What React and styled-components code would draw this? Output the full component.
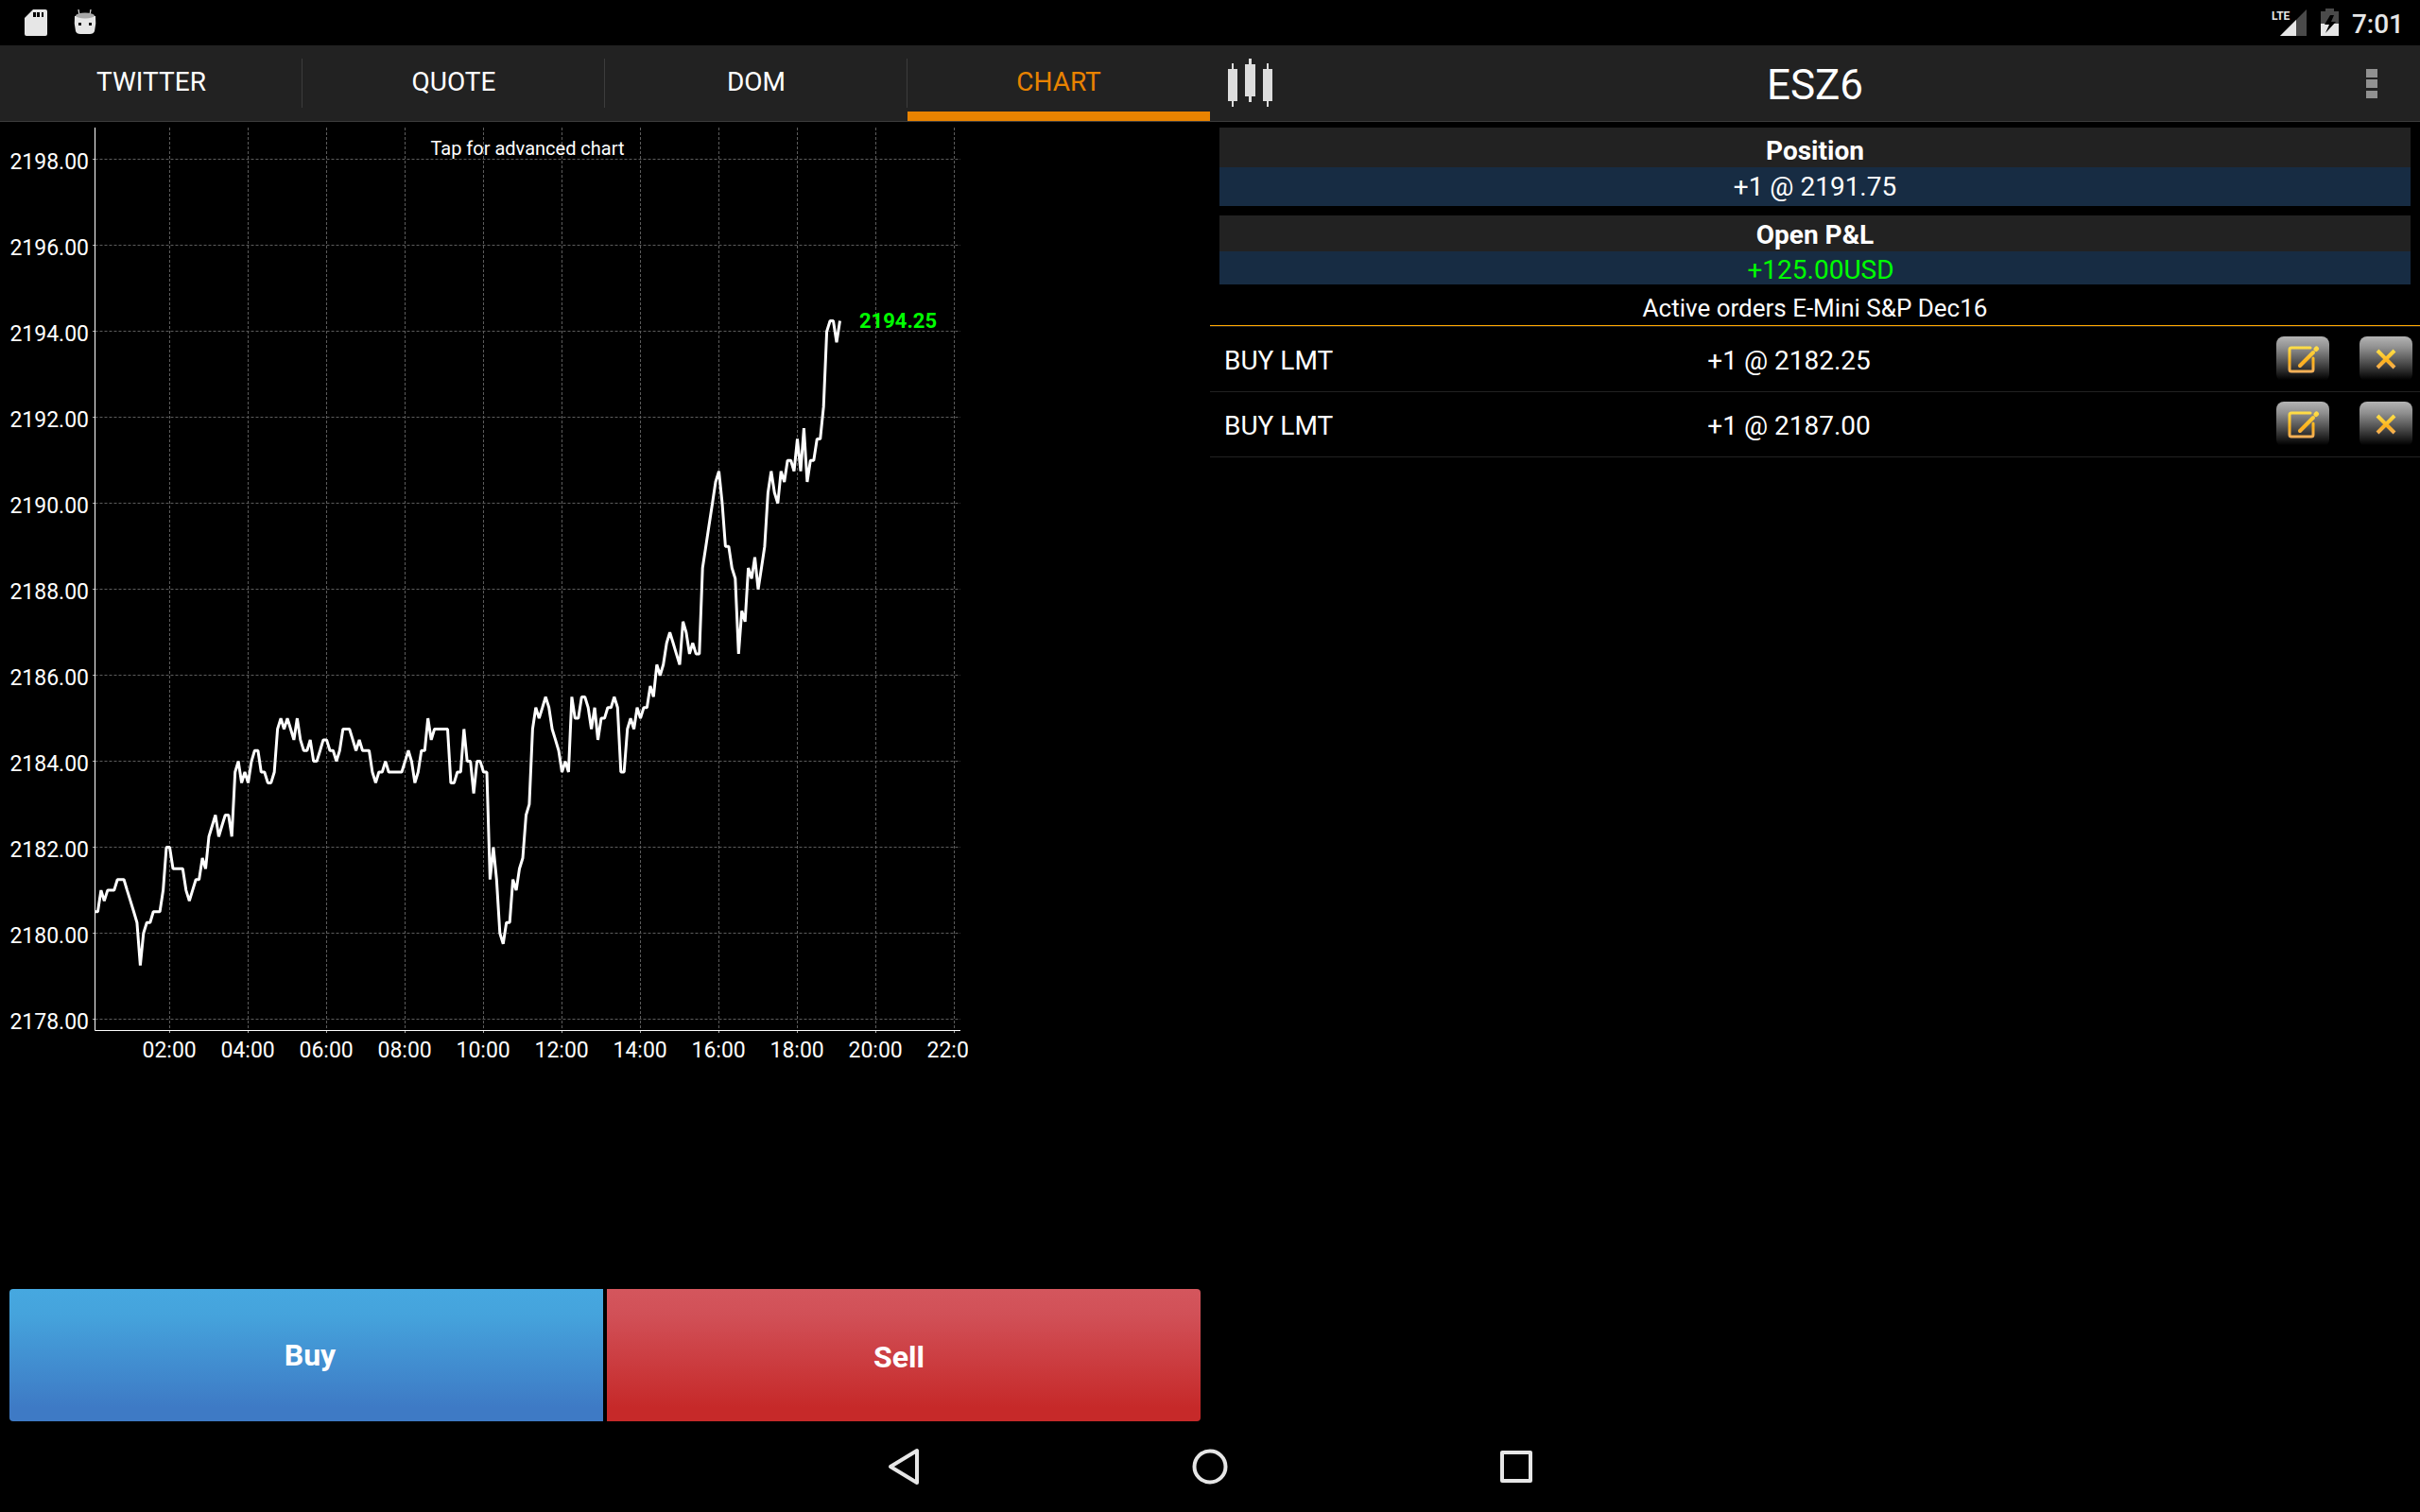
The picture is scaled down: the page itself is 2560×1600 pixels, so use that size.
import React, { useState } from 'react';
import styled, { createGlobalStyle, css } from 'styled-components';

const GlobalStyle = createGlobalStyle`
  * {
    box-sizing: border-box;
  }
  body {
    margin: 0;
    background: #000;
    color: #fff;
    font-family: Roboto, 'Liberation Sans', sans-serif;
    font-size: 28px;
    line-height: 34px;
  }
  button {
    border: 0;
    padding: 0;
    background: none;
    color: inherit;
    font: inherit;
    cursor: pointer;
  }
  svg {
    display: block;
  }
`;

const Page = styled.div`
  display: flex;
  flex-direction: column;
  min-height: 100vh;
`;

const StatusBar = styled.div`
  display: flex;
  justify-content: space-between;
  align-items: center;
  height: 48px;
  padding: 0 17px 0 26px;
  color: #e6e6e6;
`;

const StatusGroup = styled.div`
  display: flex;
  align-items: center;
  gap: ${(props) => props.$gap}px;
`;

const Clock = styled.time`
  font-weight: 500;
  line-height: 28px;
  padding-top: 4px;
`;

const Header = styled.header`
  display: grid;
  grid-template-columns: 1fr 1fr;
  height: 81px;
  background: #222;
  border-bottom: 1px solid #3c3c3c;
`;

const Tabs = styled.nav`
  display: grid;
  grid-template-columns: repeat(4, 1fr);
`;

const Tab = styled.button`
  display: flex;
  align-items: center;
  justify-content: center;
  padding-top: 8px;
  border-bottom: 10px solid ${(props) => (props.$active ? '#e98300' : 'transparent')};
  color: ${(props) => (props.$active ? '#e98300' : '#fff')};
  position: relative;

  &:not(:last-child)::after {
    content: '';
    position: absolute;
    top: 14px;
    right: 0;
    width: 1px;
    height: 52px;
    background: #3c3c3c;
  }
`;

const TitleBar = styled.div`
  display: grid;
  grid-template-columns: 80px 1fr 80px;
  align-items: center;
`;

const Title = styled.h1`
  margin: 0;
  padding-top: 4px;
  font-size: 44px;
  line-height: 52px;
  font-weight: 400;
  text-align: center;
`;

const IconButton = styled.button`
  display: flex;
  justify-content: ${(props) => (props.$end ? 'flex-end' : 'flex-start')};
  padding: ${(props) => (props.$end ? '0 45px 0 0' : '0 0 0 18px')};
`;

const Main = styled.main`
  flex: 1;
  display: grid;
  grid-template-columns: 1fr 1fr;
`;

const Pane = styled.section`
  display: flex;
  flex-direction: column;
  min-width: 0;
`;

const ChartButton = styled.button`
  width: 80%;

  svg {
    width: 100%;
    height: auto;
  }
`;

const AxisText = styled.text`
  fill: #fff;
  font-size: 23px;
`;

const HintText = styled.text`
  fill: #fff;
  font-size: 20px;
`;

const LastText = styled.text`
  fill: #00ff00;
  font-size: 22px;
  font-weight: 700;
`;

const TradeBar = styled.div`
  display: grid;
  grid-template-columns: 1fr 1fr;
  gap: 4px;
  margin-top: auto;
  padding: 0 10px;
`;

const sides = {
  buy: css`
    padding-left: 8px;
    border-radius: 4px 0 0 4px;
    background: linear-gradient(#46a8e0, #45a3dc 20%, #3e7ac5 90%);
  `,
  sell: css`
    padding: 4px 10px 0 0;
    border-radius: 0 4px 4px 0;
    background: linear-gradient(#d4565d, #d15057 20%, #c62929 90%);
  `,
};

const TradeButton = styled.button`
  height: 140px;
  font-size: 32px;
  font-weight: 700;
  ${(props) => sides[props.$side]}
`;

const Info = styled.dl`
  margin: 6px 10px 0;
  text-align: center;

  & + & {
    margin-top: 10px;
  }
`;

const InfoName = styled.dt`
  padding: ${(props) => (props.$tight ? '4px 0 0' : '8px 0 0')};
  background: #222;
  font-weight: 700;
`;

const InfoValue = styled.dd`
  margin: 0;
  padding: ${(props) => (props.$tight ? '5px 0 0 12px' : '4px 0 3px')};
  line-height: ${(props) => (props.$tight ? '30px' : '34px')};
  background: #172c43;
  color: ${(props) => (props.$up ? '#00ff00' : '#fff')};
`;

const Orders = styled.table`
  width: 100%;
  border-collapse: separate;
  border-spacing: 0;

  td {
    height: 69px;
    padding: 0;
    border-bottom: 1px solid #222;
  }

  tr:first-child td {
    height: 70px;
    border-top: 1px solid #222;
  }
`;

const OrdersTitle = styled.caption`
  padding: 8px 0 1px;
  border-bottom: 1px solid #ffa800;
  font-size: 26px;
`;

const OrderSide = styled.td`
  && {
    padding: 4px 0 0 15px;
  }
  width: 1px;
  white-space: nowrap;
`;

const OrderPrice = styled.td`
  && {
    padding: 4px 18px 0 0;
  }
  text-align: center;
`;

const OrderActions = styled.td`
  width: 167px;
`;

const ActionRow = styled.div`
  display: flex;
  gap: 32px;
  padding: 0 8px 0 15px;
`;

const ActionButton = styled.button`
  display: flex;
  align-items: center;
  justify-content: center;
  width: 56px;
  height: 48px;
  border-radius: 8px;
  background: linear-gradient(#b4b4b4, #8f8f8f 25%, #4a4a4a 60%, #000 96%);
`;

const NavBar = styled.footer`
  display: flex;
  justify-content: center;
  height: 96px;
`;

const NavButton = styled.button`
  display: flex;
  align-items: center;
  justify-content: center;
  width: 324px;
`;

const TABS = ['TWITTER', 'QUOTE', 'DOM', 'CHART'];

const ORDERS = [
  { side: 'BUY LMT', price: '+1 @ 2182.25' },
  { side: 'BUY LMT', price: '+1 @ 2187.00' },
];

const HOURS = ['02:00', '04:00', '06:00', '08:00', '10:00', '12:00', '14:00', '16:00', '18:00', '20:00', '22:0'];

// one value per 5 minutes from 00:05, in ticks of 0.25 above 2178.00
const TICKS = [
  10, 10, 12, 11, 12, 12, 12, 13, 13, 13, 12, 11, 10, 9, 5, 8, 9, 9, 10, 10,
  10, 12, 16, 16, 14, 14, 14, 14, 12, 11, 12, 13, 13, 15, 14, 17, 18, 19, 17, 18,
  19, 19, 17, 23, 24, 22, 23, 22, 24, 25, 25, 23, 23, 22, 22, 23, 27, 28, 27, 28,
  27, 26, 28, 26, 25, 25, 26, 24, 24, 25, 26, 26, 25, 25, 24, 25, 27, 27, 27, 26,
  25, 26, 25, 25, 25, 23, 22, 23, 23, 24, 23, 23, 23, 23, 23, 24, 25, 24, 22, 23,
  25, 25, 28, 26, 27, 27, 27, 27, 27, 22, 22, 23, 23, 27, 24, 24, 21, 24, 24, 23,
  23, 13, 16, 13, 8, 7, 9, 9, 13, 12, 14, 15, 19, 20, 27, 29, 28, 29, 30, 29,
  27, 26, 25, 23, 24, 23, 30, 28, 28, 30, 30, 29, 27, 29, 26, 28, 28, 29, 29, 30,
  29, 23, 23, 27, 28, 27, 29, 28, 29, 29, 31, 30, 33, 32, 33, 35, 36, 35, 34, 33,
  37, 36, 34, 35, 34, 34, 42, 44, 46, 48, 50, 51, 48, 44, 44, 42, 41, 34, 38, 37,
  42, 41, 43, 40, 42, 44, 49, 51, 49, 48, 51, 50, 52, 52, 51, 54, 51, 55, 50, 52,
  52, 54, 54, 57, 64, 65, 65, 63, 65,
];

const PLOT = { left: 100.5, right: 1016, top: 6, bottom: 961.5 };
const HOUR = 41.5;
const timeX = (hours) => 96.5 + hours * HOUR;
const tickY = (tick) => 949.5 - tick * 11.37;

const PriceChart = () => {
  const prices = Array.from({ length: 11 }, (_, i) => 2178 + i * 2);
  const points = TICKS.map((t, i) => `${timeX((i + 1) / 12).toFixed(1)},${tickY(t).toFixed(1)}`).join(' ');

  return (
    <svg viewBox="0 0 1024 1010" role="img" aria-label="ESZ6 price chart">
      <defs>
        <clipPath id="plot">
          <rect x={PLOT.left} y="0" width="920" height={PLOT.bottom} />
        </clipPath>
      </defs>
      {prices.map((p) => {
        const y = Math.floor(tickY((p - 2178) * 4)) + 0.5;
        return (
          <g key={p}>
            <line x1={PLOT.left} x2={PLOT.right} y1={y} y2={y} stroke="#5c5c5c" strokeDasharray="3 2" />
            <line x1="98" x2={PLOT.left} y1={y} y2={y} stroke="#aaa" />
            <AxisText x="94" y={y + 10} textAnchor="end">{p.toFixed(2)}</AxisText>
          </g>
        );
      })}
      {HOURS.map((label, i) => {
        const x = timeX(2 + i * 2);
        return (
          <g key={label}>
            <line x1={x} x2={x} y1={PLOT.top} y2={PLOT.bottom} stroke="#5c5c5c" strokeDasharray="3 2" />
            <line x1={x} x2={x} y1={PLOT.bottom} y2="964" stroke="#aaa" />
            <AxisText x={x - 29} y="990">{label}</AxisText>
          </g>
        );
      })}
      <path d={`M${PLOT.left} ${PLOT.top}V${PLOT.bottom}H${PLOT.right}`} fill="none" stroke="#fff" />
      <polyline points={points} clipPath="url(#plot)" fill="none" stroke="#fff" strokeWidth="3" strokeLinejoin="bevel" />
      <LastText x="909" y="218">2194.25</LastText>
      <HintText x="558" y="35" textAnchor="middle">Tap for advanced chart</HintText>
    </svg>
  );
};

const SdCardIcon = () => (
  <svg width="24" height="28" viewBox="0 0 24 28">
    <path d="M9 0h13a2 2 0 0 1 2 2v24a2 2 0 0 1-2 2H2a2 2 0 0 1-2-2V9z" fill="#e6e6e6" />
    <path d="M9 3h3v5H9zM13 3h3v5h-3zM18 3h2v5h-2z" fill="#000" />
  </svg>
);

const DroidIcon = () => (
  <svg width="24" height="28" viewBox="0 0 24 28">
    <path d="M5 0l1 6M18 0l-1 6" stroke="#d0d0d0" strokeWidth="1.3" />
    <path d="M1 7Q0 15 2 23q1 3 5 3h10q4 0 5-3 2-8 1-16z" fill="#e6e6e6" />
    <ellipse cx="12" cy="6.5" rx="10" ry="3" fill="#a8a8a8" />
    <path d="M5 14h3v3H5zM16 14h3v3h-3z" fill="#111" />
  </svg>
);

const LteText = styled.text`
  fill: #e6e6e6;
  font-size: 12px;
  font-weight: 700;
`;

const SignalIcon = () => (
  <svg width="38" height="30" viewBox="0 0 38 30">
    <path d="M37 1v28H9z" fill="#4a4a4a" />
    <path d="M26 12v17H9z" fill="#e6e6e6" />
    <LteText x="0" y="12">LTE</LteText>
  </svg>
);

const BatteryIcon = () => (
  <svg width="19" height="30" viewBox="0 0 19 30">
    <path d="M5 0h9v3h5v13H0V3h5z" fill="#4a4a4a" />
    <path d="M0 16h19v13H0z" fill="#e6e6e6" />
    <path d="M10 7L4 17h5L5 26l11-12h-5l3-7z" fill="#000" />
  </svg>
);

const CandlesIcon = () => (
  <svg width="50" height="52" viewBox="0 0 50 52" fill="#ddd">
    <path d="M1 11h10v34H1zM5 5h2v46H5z" />
    <path d="M19 6h11v34H19zM23 0h3v46h-3z" />
    <path d="M38 11h10v34H38zM42 5h2v46h-2z" />
  </svg>
);

const MenuIcon = () => (
  <svg width="12" height="32" viewBox="0 0 12 32" fill="#919191">
    <path d="M0 1h12v9H0zM0 12h12v9H0zM0 24h12v8H0z" />
  </svg>
);

const Gold = ({ id, height }) => (
  <defs>
    <linearGradient id={id} x1="0" y1="0" x2="0" y2={height} gradientUnits="userSpaceOnUse">
      <stop offset="0.1" stopColor="#ffe04a" />
      <stop offset="0.6" stopColor="#fdb01c" />
      <stop offset="1" stopColor="#f0b070" />
    </linearGradient>
  </defs>
);

const EditIcon = () => (
  <svg width="36" height="34" viewBox="0 0 36 34" fill="none" stroke="url(#gold-edit)" strokeLinecap="round">
    <Gold id="gold-edit" height="34" />
    <path d="M26 5H6a2 2 0 0 0-2 2v21a2 2 0 0 0 2 2h21a2 2 0 0 0 2-2V16" strokeWidth="3" />
    <path d="M15 24L29 10" strokeWidth="4" />
    <path d="M32 6.5L32.500 6" strokeWidth="5" />
  </svg>
);

const CrossIcon = () => (
  <svg width="24" height="24" viewBox="0 0 24 24" fill="none" stroke="url(#gold-cross)">
    <Gold id="gold-cross" height="24" />
    <path d="M3 3l18 18M21 3L3 21" strokeWidth="4" />
  </svg>
);

const App = () => {
  const [tab, setTab] = useState('CHART');

  return (
    <>
      <GlobalStyle />
      <Page>
        <StatusBar>
          <StatusGroup $gap={28}>
            <SdCardIcon />
            <DroidIcon />
          </StatusGroup>
          <StatusGroup $gap={14}>
            <SignalIcon />
            <BatteryIcon />
            <Clock>7:01</Clock>
          </StatusGroup>
        </StatusBar>
        <Header>
          <Tabs>
            {TABS.map((name) => (
              <Tab key={name} $active={name === tab} onClick={() => setTab(name)}>
                {name}
              </Tab>
            ))}
          </Tabs>
          <TitleBar>
            <IconButton aria-label="Chart type">
              <CandlesIcon />
            </IconButton>
            <Title>ESZ6</Title>
            <IconButton $end aria-label="Menu">
              <MenuIcon />
            </IconButton>
          </TitleBar>
        </Header>
        <Main>
          <Pane>
            <ChartButton>
              <PriceChart />
            </ChartButton>
            <TradeBar>
              <TradeButton $side="buy">Buy</TradeButton>
              <TradeButton $side="sell">Sell</TradeButton>
            </TradeBar>
          </Pane>
          <Pane>
            <Info>
              <InfoName>Position</InfoName>
              <InfoValue>+1 @ 2191.75</InfoValue>
            </Info>
            <Info>
              <InfoName $tight>Open P&amp;L</InfoName>
              <InfoValue $tight $up>+125.00USD</InfoValue>
            </Info>
            <Orders>
              <OrdersTitle>Active orders E-Mini S&amp;P Dec16</OrdersTitle>
              <tbody>
                {ORDERS.map((order) => (
                  <tr key={order.price}>
                    <OrderSide>{order.side}</OrderSide>
                    <OrderPrice>{order.price}</OrderPrice>
                    <OrderActions>
                      <ActionRow>
                        <ActionButton aria-label="Edit order">
                          <EditIcon />
                        </ActionButton>
                        <ActionButton aria-label="Cancel order">
                          <CrossIcon />
                        </ActionButton>
                      </ActionRow>
                    </OrderActions>
                  </tr>
                ))}
              </tbody>
            </Orders>
          </Pane>
        </Main>
        <NavBar>
          <NavButton aria-label="Back">
            <svg width="34" height="40" viewBox="0 0 34 40" fill="none" stroke="#e6e6e6" strokeWidth="4" strokeLinejoin="round">
              <path d="M31 3v34L3 20z" />
            </svg>
          </NavButton>
          <NavButton aria-label="Home">
            <svg width="38" height="38" viewBox="0 0 38 38" fill="none" stroke="#e6e6e6" strokeWidth="4">
              <circle cx="19" cy="19" r="16.500" />
            </svg>
          </NavButton>
          <NavButton aria-label="Recent apps">
            <svg width="34" height="34" viewBox="0 0 34 34" fill="none" stroke="#e6e6e6" strokeWidth="4" strokeLinejoin="round">
              <path d="M2 2h30v30H2z" />
            </svg>
          </NavButton>
        </NavBar>
      </Page>
    </>
  );
};

export default App;
